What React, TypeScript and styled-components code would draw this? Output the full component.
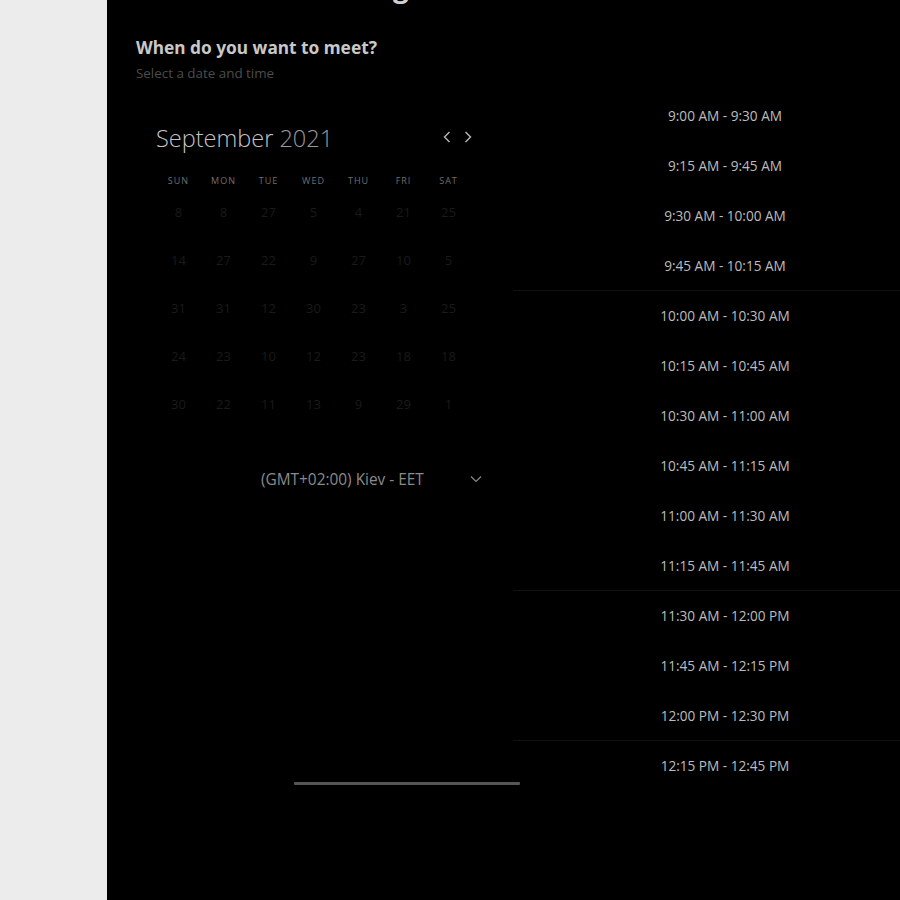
import React from "react";
import styled, { createGlobalStyle } from "styled-components";

const Global = createGlobalStyle`
  html, body { margin: 0; padding: 0; background: #000; }
  body { font-family: "Open Sans", "Noto Sans", sans-serif; overflow: hidden; }
`;

const Page = styled.div`
  display: flex;
  width: 900px;
  height: 900px;
  overflow: hidden;
`;

const Side = styled.aside`
  width: 107px;
  flex: none;
  background: #ececec;
`;

const Main = styled.main`
  position: relative;
  flex: 1;
  background: #000;
  display: flex;
  flex-direction: column;
`;

const Header = styled.header`
  padding-left: 29px;
  display: flex;
  flex-direction: column;
`;

const Title = styled.h1`
  margin: -30px 0 0;
  height: 32px;
  font-size: 28px;
  line-height: 32px;
  font-weight: 700;
  color: #d0d0d0;
  white-space: nowrap;
`;

const Question = styled.h2`
  margin: 34px 0 0;
  font-family: "Noto Sans", "Open Sans", sans-serif;
  font-size: 17.3px;
  line-height: 24px;
  font-weight: 700;
  color: #c8c8c8;
`;

const Sub = styled.p`
  margin: 2px 0 0;
  font-size: 13.4px;
  line-height: 22px;
  color: #4c4c4c;
`;

const Content = styled.div`
  display: flex;
  margin-top: 6px;
`;

const Left = styled.section`
  width: 406px;
  flex: none;
  padding: 31px 0 0 49px;
  box-sizing: border-box;
`;

const MonthBar = styled.div`
  display: flex;
  align-items: center;
  justify-content: space-between;
  width: 320px;
  height: 34px;
`;

const Month = styled.div`
  font-size: 23.5px;
  font-weight: 300;
  line-height: 34px;
  color: #c4c4c4;
  span { color: #9a9a9a; }
`;

const Nav = styled.div`
  display: flex;
  gap: 13px;
  padding-right: 4px;
  margin-top: -3px;
`;

const NavBtn = styled.button`
  background: none;
  border: 0;
  padding: 0;
  width: 8px;
  height: 12px;
  display: flex;
  color: #b0b0b0;
  cursor: pointer;
`;

const Grid = styled.div`
  display: grid;
  grid-template-columns: repeat(7, 45px);
  width: 315px;
`;

const DayHead = styled.div`
  margin-top: 18px;
  height: 15px;
  line-height: 15px;
  text-align: center;
  font-size: 9px;
  letter-spacing: 1px;
  color: #6e6e6e;
`;

const DateCell = styled.div`
  height: 48px;
  line-height: 48px;
  text-align: center;
  font-size: 13px;
  color: #1a1a1a;
`;

const Tz = styled.div`
  margin: 40px 0 0 105px;
  width: 221px;
  height: 22px;
  display: flex;
  align-items: center;
  justify-content: space-between;
  font-size: 15.4px;
  color: #8a8a8a;
`;

const Right = styled.section`
  flex: 1;
  display: flex;
  flex-direction: column;
`;

const Slot = styled.div<{ $divider?: boolean }>`
  height: 50px;
  box-sizing: border-box;
  width: 424px;
  display: flex;
  align-items: center;
  justify-content: center;
  font-size: 13.6px;
  color: #bdbdbd;
  border-top: 1px solid ${(p) => (p.$divider ? "#111111" : "transparent")};
`;

const ScrollThumb = styled.div`
  position: absolute;
  left: 187px;
  top: 782px;
  width: 226px;
  height: 3px;
  background: #555;
  border-radius: 1px;
`;

const days = ["SUN", "MON", "TUE", "WED", "THU", "FRI", "SAT"];
const dates = [
  8, 8, 27, 5, 4, 21, 25,
  14, 27, 22, 9, 27, 10, 5,
  31, 31, 12, 30, 23, 3, 25,
  24, 23, 10, 12, 23, 18, 18,
  30, 22, 11, 13, 9, 29, 1,
];
const slots = [
  "9:00 AM - 9:30 AM",
  "9:15 AM - 9:45 AM",
  "9:30 AM - 10:00 AM",
  "9:45 AM - 10:15 AM",
  "10:00 AM - 10:30 AM",
  "10:15 AM - 10:45 AM",
  "10:30 AM - 11:00 AM",
  "10:45 AM - 11:15 AM",
  "11:00 AM - 11:30 AM",
  "11:15 AM - 11:45 AM",
  "11:30 AM - 12:00 PM",
  "11:45 AM - 12:15 PM",
  "12:00 PM - 12:30 PM",
  "12:15 PM - 12:45 PM",
];
const dividers = new Set([4, 10, 13]);

const Chevron = ({ dir }: { dir: "left" | "right" | "down" }) => {
  if (dir === "down")
    return (
      <svg width="12" height="8" viewBox="0 0 12 8" fill="none">
        <polyline points="1,1.5 6,6.5 11,1.5" stroke="#8a8a8a" strokeWidth="1.2" />
      </svg>
    );
  return (
    <svg width="8" height="12" viewBox="0 0 8 12" fill="none">
      <polyline
        points={dir === "left" ? "6.5,1 1.5,6 6.5,11" : "1.5,1 6.5,6 1.5,11"}
        stroke="currentColor"
        strokeWidth="1.5"
      />
    </svg>
  );
};

export default function App() {
  return (
    <>
      <Global />
      <Page>
        <Side />
        <Main>
          <Header>
            <Title>Schedule a meeting</Title>
            <Question>When do you want to meet?</Question>
            <Sub>Select a date and time</Sub>
          </Header>
          <Content>
            <Left>
              <MonthBar>
                <Month>
                  September <span>2021</span>
                </Month>
                <Nav>
                  <NavBtn aria-label="Previous month">
                    <Chevron dir="left" />
                  </NavBtn>
                  <NavBtn aria-label="Next month">
                    <Chevron dir="right" />
                  </NavBtn>
                </Nav>
              </MonthBar>
              <Grid>
                {days.map((d) => (
                  <DayHead key={d}>{d}</DayHead>
                ))}
                {dates.map((d, i) => (
                  <DateCell key={i}>{d}</DateCell>
                ))}
              </Grid>
              <Tz>
                <span>(GMT+02:00) Kiev - EET</span>
                <Chevron dir="down" />
              </Tz>
            </Left>
            <Right>
              {slots.map((s, i) => (
                <Slot key={s} $divider={dividers.has(i)}>
                  {s}
                </Slot>
              ))}
            </Right>
          </Content>
          <ScrollThumb />
        </Main>
      </Page>
    </>
  );
}
